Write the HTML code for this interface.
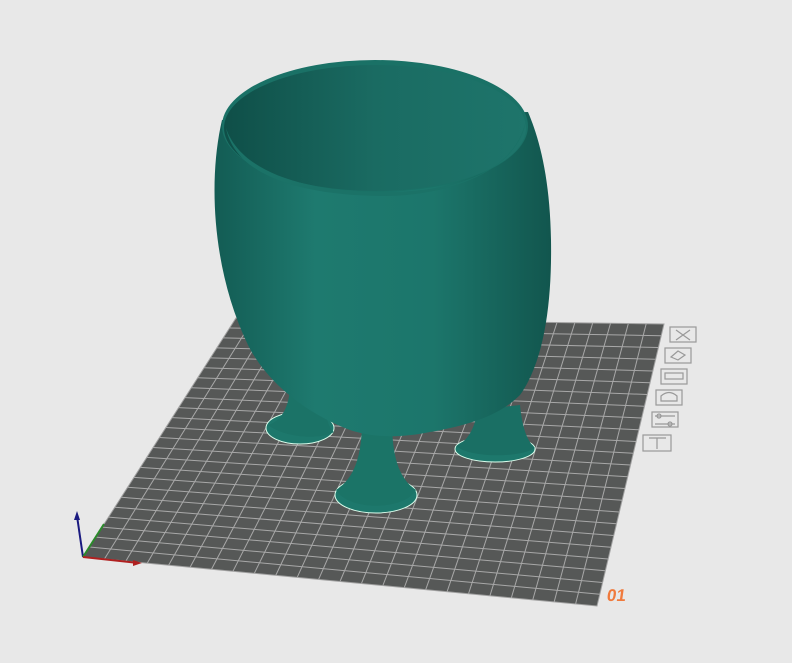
<!DOCTYPE html>
<html><head><style>
html,body{margin:0;padding:0;background:#e8e8e8;width:792px;height:663px;overflow:hidden}
svg{position:absolute;left:0;top:0}
.t{position:absolute;left:607px;top:586px;color:#f07a3c;font:bold 17px "Liberation Sans",sans-serif;transform:skewX(-8deg)}
</style></head><body>
<svg width="792" height="663" viewBox="0 0 792 663">
<defs>
<linearGradient id="body" x1="0" x2="1" y1="0" y2="0">
<stop offset="0" stop-color="#135c54"/><stop offset="0.3" stop-color="#1e7a6f"/><stop offset="0.65" stop-color="#1c766b"/><stop offset="1" stop-color="#12564e"/>
</linearGradient>
<linearGradient id="inner" x1="0" x2="1">
<stop offset="0" stop-color="#0f4f48"/><stop offset="0.5" stop-color="#1a6b62"/><stop offset="1" stop-color="#1e756b"/>
</linearGradient>
</defs>
<polygon points="83,557 236,318 664,324 597,606" fill="#565857" stroke="#a0a0a0" stroke-width="1"/>
<g id="grid" stroke="#a8a8a8" stroke-width="1"></g>
<!-- feet -->
<ellipse cx="300" cy="428" rx="34" ry="16" fill="#1d786c" stroke="#dfe" stroke-width="1"/>
<ellipse cx="495" cy="449" rx="40" ry="13" fill="#1d786c" stroke="#dfe" stroke-width="1"/>
<ellipse cx="376" cy="495" rx="41" ry="18" fill="#1d786c" stroke="#dfe" stroke-width="1"/>
<path d="M268,425 C285,420 290,400 290,385 L325,395 C325,415 328,428 334,432 C320,440 285,438 268,425 Z" fill="#1b7367"/>
<path d="M456,446 C470,440 475,425 478,410 L520,405 C522,425 526,440 535,448 C520,458 470,458 456,446 Z" fill="#1a6f64"/>
<path d="M336,490 C355,478 362,455 362,420 L392,420 C392,455 398,478 416,490 C405,510 350,512 336,490 Z" fill="#1b7467"/>
<!-- body -->
<path d="M222,120 C208,180 212,270 248,345 C268,385 310,415 350,430 C375,438 400,438 430,432 C470,425 500,415 520,395 C545,360 552,300 551,240 C550,180 540,140 528,112 Z" fill="url(#body)"/>
<ellipse cx="375" cy="126" rx="153" ry="66" fill="#1a7166"/>
<ellipse cx="375" cy="128" rx="151" ry="63" fill="url(#inner)"/>
<path d="M226,128 C240,170 300,192 385,192 C460,192 515,170 526,120 C520,165 460,195 385,196 C300,196 235,175 226,128 Z" fill="#1b7267"/>
<!-- axes -->
<line x1="83" y1="557" x2="77" y2="516" stroke="#1a1a80" stroke-width="2"/>
<polygon points="77,511 74,520 80,520" fill="#1a1a80"/>
<line x1="83" y1="557" x2="104" y2="524" stroke="#2a8a2a" stroke-width="2"/>
<line x1="83" y1="557" x2="138" y2="563" stroke="#b02020" stroke-width="2"/>
<polygon points="142,563 133,560 133,566" fill="#b02020"/>
<!-- icons -->
<g fill="none" stroke="#999" stroke-width="1.2">
<rect x="670" y="327" width="26" height="15"/>
<path d="M676,330 L690,340 M690,330 L676,340"/>
<rect x="665" y="348" width="26" height="15"/>
<path d="M671,357 L678,351 L685,355 L678,360 Z"/>
<rect x="661" y="369" width="26" height="15"/>
<rect x="665" y="373" width="18" height="6"/>
<rect x="656" y="390" width="26" height="15"/>
<path d="M661,401 L661,396 Q669,389 677,396 L677,401 Z"/>
<rect x="652" y="412" width="26" height="15"/>
<path d="M655,416 L675,416 M655,424 L675,424"/><circle cx="659" cy="416" r="2"/><circle cx="670" cy="424" r="2"/>
<rect x="643" y="435" width="28" height="16"/>
<path d="M649,438 L666,438 M657,438 L657,449"/>
</g>
</svg>
<div class="t">01</div>
<script>
var g=document.getElementById('grid'),P=[[83,557],[236,318],[664,324],[597,606]],N=24,s='';
function L(a,b,t){return[a[0]+(b[0]-a[0])*t,a[1]+(b[1]-a[1])*t]}
for(var i=1;i<N;i++){var t=i/N;var a=L(P[0],P[1],t),b=L(P[3],P[2],t),c=L(P[0],P[3],t),d=L(P[1],P[2],t);
s+='<line x1="'+a[0]+'" y1="'+a[1]+'" x2="'+b[0]+'" y2="'+b[1]+'"/><line x1="'+c[0]+'" y1="'+c[1]+'" x2="'+d[0]+'" y2="'+d[1]+'"/>';}
g.innerHTML=s;
</script>
</body></html>
